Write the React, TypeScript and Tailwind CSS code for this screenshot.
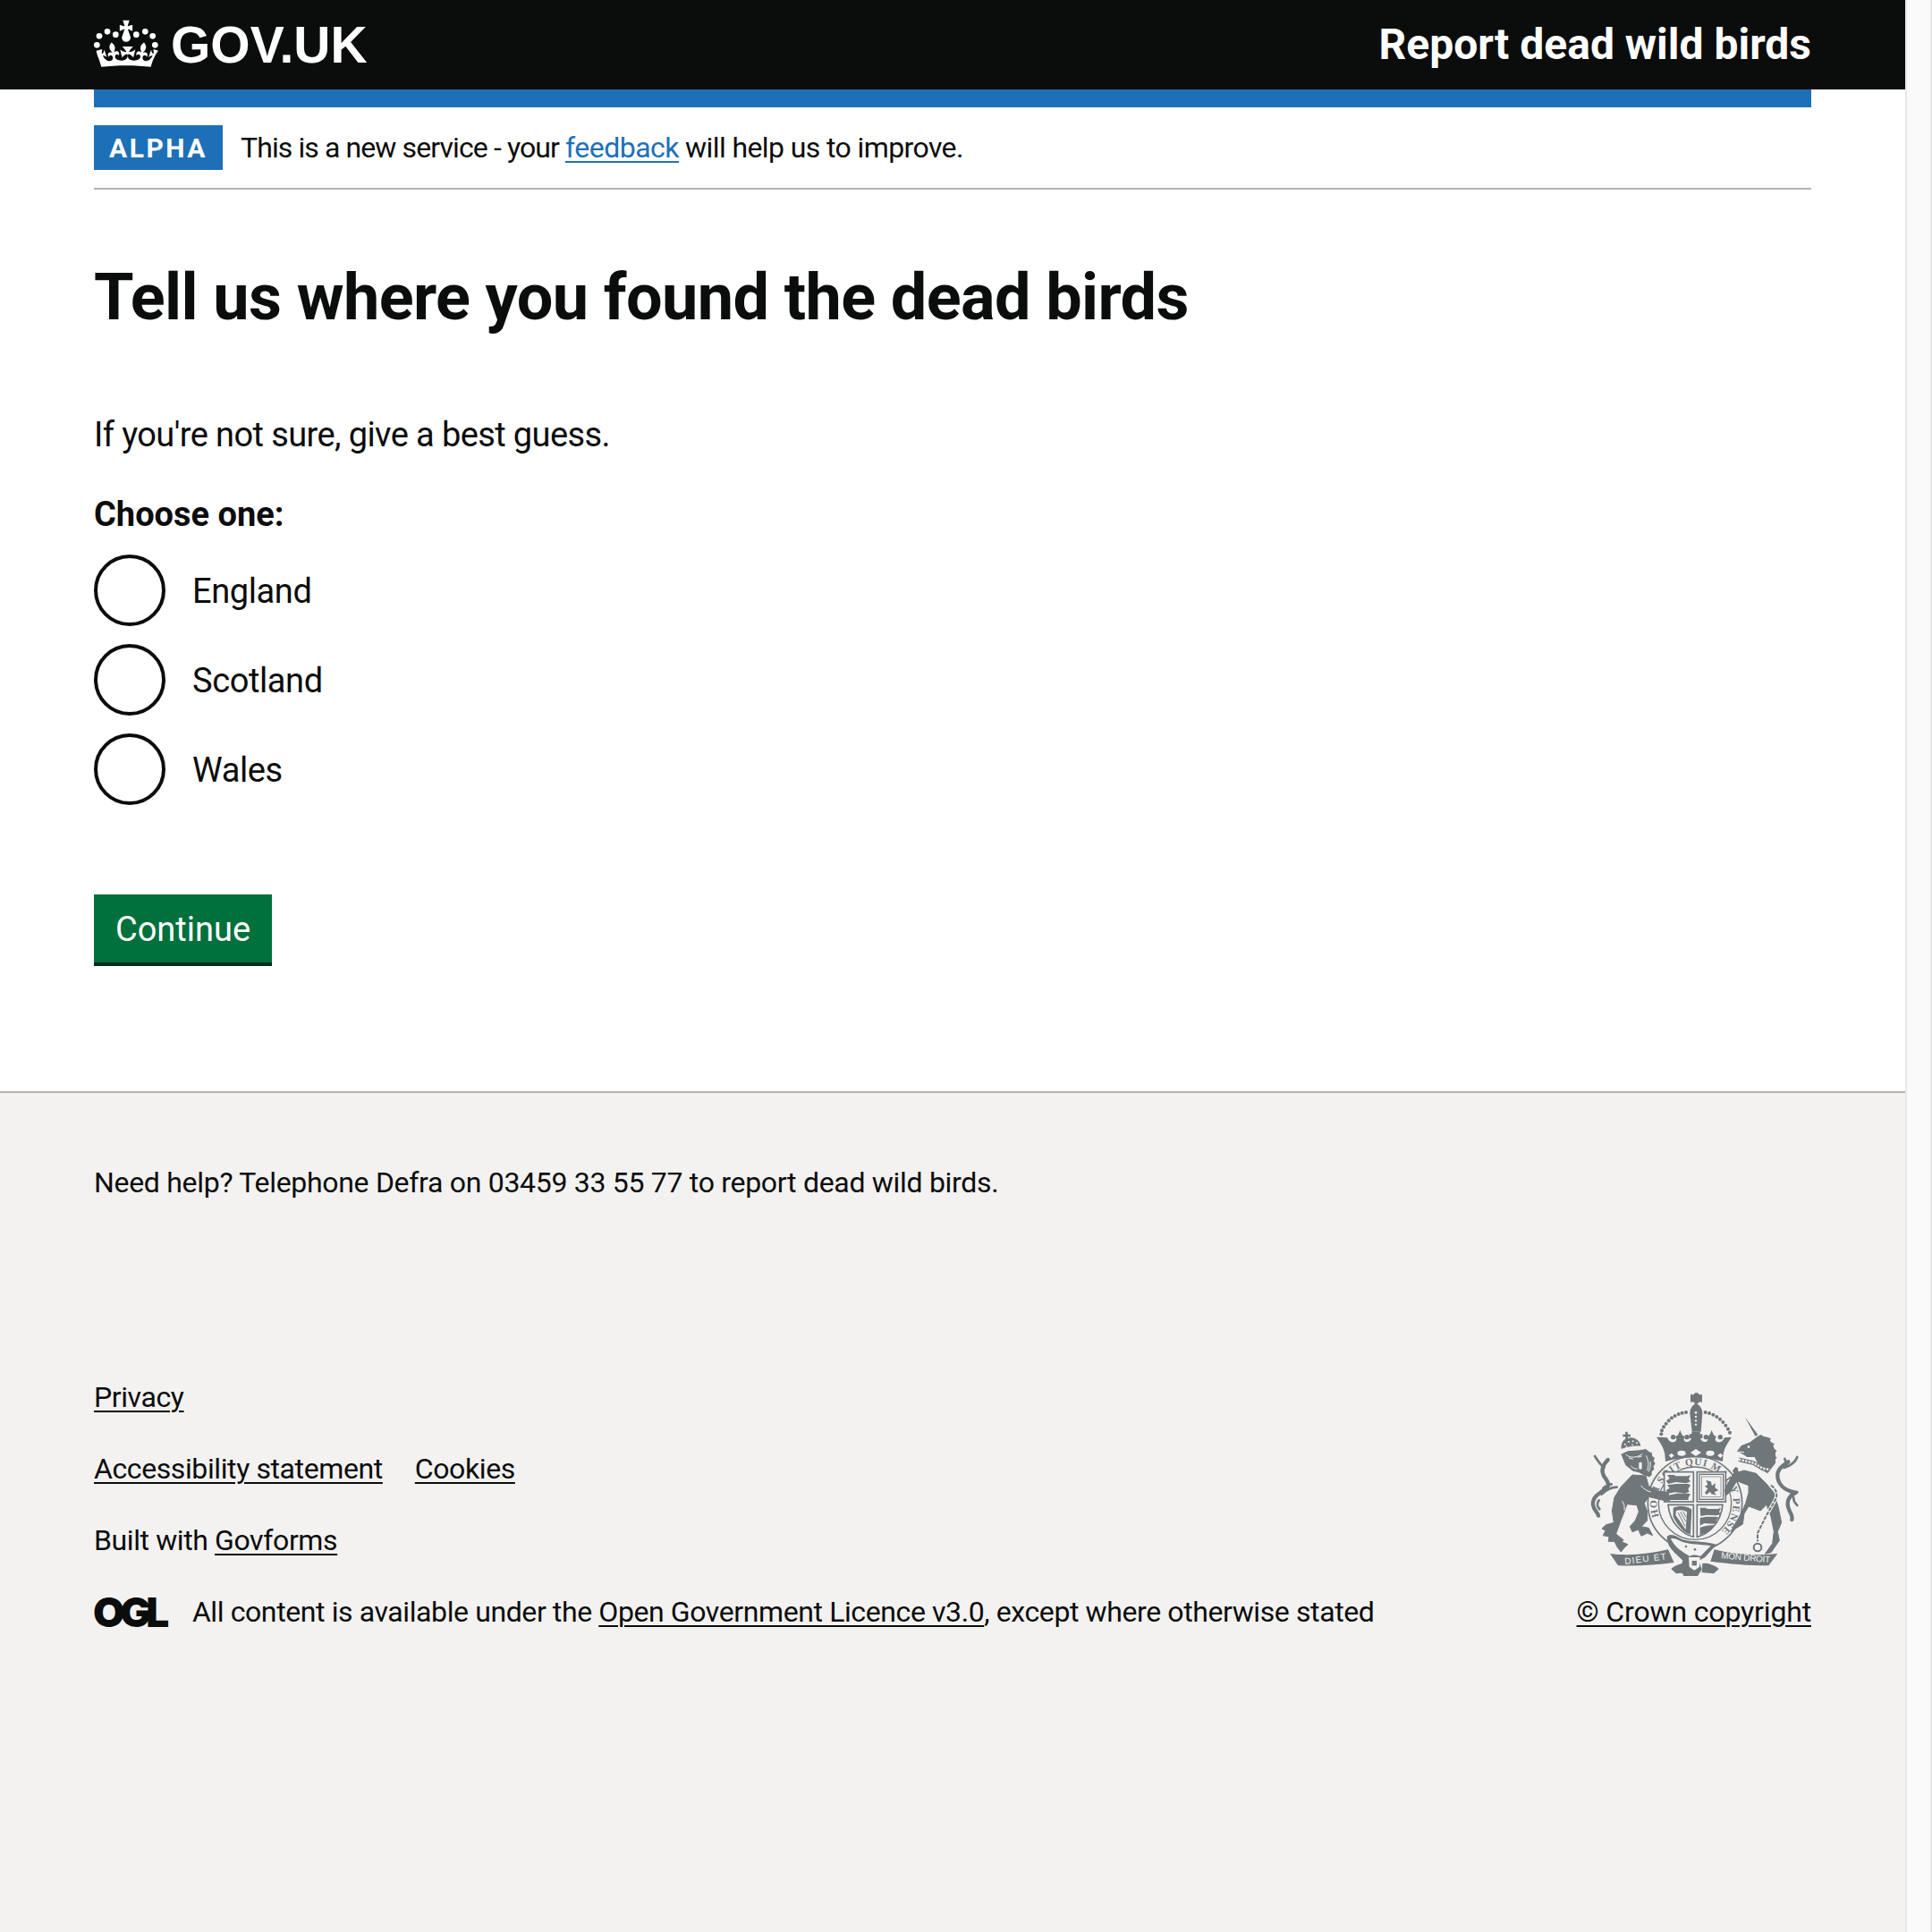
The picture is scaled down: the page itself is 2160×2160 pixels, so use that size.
const font = "font-['Roboto','Liberation_Sans',sans-serif]";
const grey = "#6f777b";
const bg = "#f3f2f1";

function Crown() {
  const pearls = [[325, 148], [333, 118], [360, 103], [388, 113], [457, 113], [487, 103], [512, 118], [520, 148]];
  return (
    <svg viewBox="315 60 216 162" className="w-[72px] h-[54px] -mt-[4px] text-white" aria-hidden="true">
      <g fill="currentColor">
        {pearls.map(([x, y]) => <circle key={x} cx={x} cy={y} r="10" />)}
        <path
          transform="translate(319 65) scale(6.5 6.2)"
          d="M17 4.7l2.3 1.2V2.5l-2.3.7-.2-.2.9-3h-3.4l.9 3-.2.2c-.1.1-2.3-.7-2.3-.7v3.4L15 4.7c.1.1.1.2.2.2l-1.3 4c-.1.2-.1.4-.1.6 0 1.1.8 2 1.9 2.2h.7c1-.2 1.9-1.1 1.9-2.2 0-.2 0-.4-.1-.6l-1.3-4c-.1-.1 0-.2.1-.2"
        />
        <path
          transform="translate(315 37) scale(6.75 6.15)"
          d="M16 29.2c4.4 0 8.6.3 12.3.8 1.1-4.5 2.4-7 3.7-8.8l-2.5-.9c.2 1.3.3 1.9 0 2.7-.4-.4-.8-1.1-1.1-2.3l-1.2 4c.7-.5 1.3-.8 2-.9-1.1 2.5-2.6 3.1-3.5 3-1.1-.2-1.7-1.2-1.5-2.1.3-1.2 1.5-1.5 2.1-.1 1.1-2.3-.8-3-2-2.3 1.9-1.9 2.1-3.5.6-5.6-2.1 1.6-2.1 3.2-1.2 5.5-1.2-1.4-3.2-.6-2.5 1.6.9-1.4 2.1-.5 1.9.8-.2 1.1-1.7 2.1-3.5 1.9-2.7-.2-2.9-2.1-2.9-3.6.7-.1 1.9.5 2.9 1.9l1-4.3c-1.1 1.1-2.1 1.4-3.2 1.4.4-1.2 2.1-3 2.1-3h-5.4s1.7 1.9 2.1 3c-1.1 0-2.1-.2-3.2-1.4l1 4.3c1-1.4 2.2-2 2.9-1.9-.1 1.5-.2 3.4-2.9 3.6-1.9.2-3.4-.8-3.5-1.9-.2-1.3 1-2.2 1.9-.8.7-2.3-1.2-3-2.5-1.6.9-2.2.9-3.9-1.2-5.5-1.5 2-1.3 3.7.6 5.6-1.2-.7-3.1 0-2 2.3.6-1.4 1.8-1.1 2.1.1.2.9-.3 1.9-1.5 2.1-.9.2-2.4-.5-3.5-3 .6 0 1.2.3 2 .9l-1.2-4c-.3 1.1-.7 1.9-1.1 2.3-.3-.8-.2-1.4 0-2.7l-2.9.9C1.3 23 2.6 25.5 3.7 30c3.7-.5 7.9-.8 12.3-.8"
        />
      </g>
    </svg>
  );
}

// royal arms, simplified. each group is traced in the coordinates of a 3x crop
function Crest() {
  const leftPearls = [[135, 75], [122, 77], [110, 81], [98, 87], [87, 94], [77, 103], [68, 113], [60, 124], [54, 136], [52, 148]];
  const rightPearls = [[200, 75], [213, 78], [226, 83], [238, 90], [249, 98], [259, 108], [268, 119], [276, 131], [282, 143]];
  return (
    <svg viewBox="0 0 240 210" className="w-[240px] h-[210px] mr-[10px]" aria-hidden="true">
      {/* garter and shield */}
      <g transform="translate(-35 -15) scale(0.3333)">
        <circle cx="465" cy="425" r="158" fill="none" stroke={grey} strokeWidth="5" />
        <circle cx="465" cy="425" r="122" fill="none" stroke={grey} strokeWidth="4" />
        <defs>
          <path id="garter-arc" d="M374.5 515.5A128 128 0 1 1 555.5 515.5" />
        </defs>
        <text fontSize="34" fontWeight="700" fill={grey} fontFamily="'Liberation Serif',serif">
          <textPath href="#garter-arc" startOffset="55" textLength="550">HONI SOIT QUI MAL Y PENSE</textPath>
        </text>
        <g fill={bg} stroke={grey} strokeWidth="5">
          <rect x="362" y="320" width="98" height="100" />
          <rect x="472" y="320" width="96" height="100" />
          <path d="M375 430h85v108c-40-10-80-50-85-108z" />
          <path d="M472 430h86c-6 58-44 98-86 108z" />
        </g>
        {/* three lions, first and fourth quarter */}
        <g fill={grey}>
          <path d="M372 330h22l8 4h38l10-4-6 14 6 8-14 6-36-4-24 6-8-10 12-8z" />
          <path d="M372 364l30-4h40l8 4-8 14 4 8-14 6-34-4-22 4-8-10 12-8z" />
          <path d="M376 398l28-6h38l8 2-8 14 2 6h-64l-6-8z" />
          <path d="M482 440h18l8 4h34l10-4-6 14 6 8-14 4-32-2-22 4z" />
          <path d="M482 474l22-4h28l12 2-8 12 2 8-12 2-30-2-14 8z" />
          <path d="M482 506l22-6 26-2-10 14-8 8-30 12z" />
        </g>
        {/* scottish lion */}
        <rect x="480" y="328" width="80" height="84" fill="none" stroke={grey} strokeWidth="4" />
        <rect x="488" y="336" width="64" height="68" fill="none" stroke={grey} strokeWidth="2" />
        <path d="M502 348l16 4 4 14 12-8-2 14 12 10-14 6 6 10-16-4-4-8-12 10-6-6 10-14-10-8 10-6z" fill={grey} />
        {/* harp */}
        <path d="M392 440c20-8 50-6 62 6l-4 84-14-6c-14-8-32-30-44-54z" fill={grey} />
        <path d="M402 450c14-4 28-2 36 4l-4 60-34-50z" fill={bg} />
        <path d="M408 456l24 46M416 454l18 32M424 452l12 20" stroke={grey} strokeWidth="3" fill="none" />
      </g>

      {/* lion */}
      <g transform="translate(0 40) scale(0.3333)">
        <g fill="none" stroke={grey} strokeLinecap="round">
          <path strokeWidth="13" d="M68 114C52 130 44 150 55 170C70 190 75 200 60 212C40 225 15 240 18 265C20 285 35 290 36 302" />
          <path strokeWidth="8" d="M24 102C36 120 44 134 56 140M98 206C80 206 65 212 46 230M80 196C70 198 60 202 52 210M40 280C30 268 30 260 38 250" />
        </g>
        <path
          fill={grey}
          stroke={grey}
          strokeWidth="3"
          strokeLinejoin="round"
          d="M150 165l-38 40-22 35-8 45 6 40-26 7-14 13 12 7-8 16 20 4-2 16h20l10 20 12 15 10-13 13-12-20-8 5-7-25-20 17-47 13-33 7-20 33 3 7 22-12 30-18 20 8 18 20-8 10 22 20-10 18 8-13-25-25-5 20-20v-30l-10-28 15-22 40 10 30 5-5-30-30-3-35-17-10-35z"
        />
        <path
          fill={grey}
          d="M112 95l23-10 40-3 20-4 12 10 8 2 2 12 8 6-4 10 6 8-6 10 2 10-8 8 0 12-8 6-20-7-15-8-20-5-25-20z"
        />
        {/* lion's crown */}
        <path fill={grey} d="M126 20h8l1 9h9v8h-9v9h-8v-9h-9v-8h9zM113 78c-3-23 12-36 22-36 15-7 40 3 43 26-22-2-44 2-65 10z" />
        <g fill={bg}>
          <circle cx="125" cy="62" r="3" />
          <circle cx="138" cy="54" r="3" />
          <circle cx="152" cy="52" r="3" />
          <circle cx="165" cy="58" r="3" />
          <circle cx="130" cy="70" r="2.5" />
          <circle cx="150" cy="64" r="2.5" />
          <rect x="172" y="122" width="10" height="24" rx="4" />
        </g>
        <g fill="none" stroke={bg} strokeWidth="3">
          <path d="M128 96c14 14 38 12 56-2M138 108l14 4M168 106l14-4M145 135c10 8 14 12 22 8M196 100c8 16 10 32 4 50M210 120c2 12 0 24-6 34M178 200c8 10 22 20 34 22M115 252c6 6 10 18 8 32" />
        </g>
      </g>

      {/* unicorn */}
      <g transform="translate(125 25) scale(0.3333)">
        <path d="M152 15l44 60-8 6z" fill={grey} />
        <path d="M128 128l12-16 30-12 20-15 15-10 10 5 13 5 17 20 10 30v35l-15 20-12 15-23-15-20-40h-25l-15-10-20-10z" fill={grey} />
        <path d="M222 82l18 6-6 10 18 8-8 10 16 14-10 8 10 16-14 4 6 12-18-6z" fill={grey} />
        <circle cx="165" cy="116" r="4" fill={bg} />
        <path d="M132 132l18 2" stroke={bg} strokeWidth="3" fill="none" />
        <path d="M132 158l50 12 30 18 24 4" fill="none" stroke={grey} strokeWidth="14" />
        <path d="M132 158l50 12 30 18 24 4" fill="none" stroke={bg} strokeWidth="7" strokeDasharray="7 4" />
        <path
          fill={grey}
          stroke={grey}
          strokeWidth="3"
          strokeLinejoin="round"
          d="M95 240l20-35 35-10 40 10 35 35 25 30 15 50 10 50-13 30 6 30-28 40-20 5 25-35 5-40-10-50-15-40-20 20-40-15-15 25-5 35-40 25 20-35 15-25 15-35 10-35v-25l-40-15-20 35-17 15-3-20z"
        />
        <path fill={grey} d="M115 205l-4-10 10-12 8 4 2 16z" />
        <path d="M240 245c18 12 24 30 14 50l-29 50-30 60v28" fill="none" stroke={bg} strokeWidth="12" />
        <path d="M240 245c18 12 24 30 14 50l-29 50-30 60v28" fill="none" stroke={grey} strokeWidth="6" strokeDasharray="13 4" />
        <circle cx="195" cy="453" r="13" fill={bg} stroke={grey} strokeWidth="6" />
        <g fill="none" stroke={grey} strokeLinecap="round">
          <path strokeWidth="13" d="M298 166C280 180 260 190 262 215C264 245 290 262 318 268C300 285 288 300 302 330C310 345 312 355 310 360" />
          <path strokeWidth="8" d="M328 150C320 172 302 180 284 186M286 156L294 178M328 268L306 284M328 312C320 304 314 296 316 286" />
        </g>
      </g>

      {/* crown */}
      <g transform="translate(65 0) scale(0.3333)">
        <path fill={grey} d="M150 14c8 4 12 2 15-4h10c3 6 7 8 14 4v28c-7-4-11-2-14 4h-10c-3-6-7-8-15-4z" />
        <path fill={grey} d="M168 44c-13 8-20 20-20 34l7 62h30l5-62c0-14-7-26-22-34z" />
        <g fill={bg}>
          <circle cx="168" cy="76" r="4" />
          <circle cx="168" cy="90" r="3.5" />
          <circle cx="168" cy="103" r="3.5" />
          <circle cx="168" cy="116" r="3.5" />
        </g>
        <g fill={grey}>
          {leftPearls.map(([x, y]) => <circle key={x} cx={x} cy={y} r="6" />)}
          {rightPearls.map(([x, y]) => <circle key={x} cx={x} cy={y} r="6" />)}
          <path d="M48 158l24 2c6 12 12 18 24 14 10-4 8-14 2-18 8-2 12-6 17-22 5 16 9 20 17 22-6 6-6 14 2 18 8 2 16-2 20-14l-10-4 10-4v-12h28v12l10 4-10 4c4 12 12 16 20 14 8-4 8-12 2-18 8-2 12-6 17-22 5 16 9 20 17 22-6 4-8 14 2 18 12 4 18-2 24-14l24-2c-12 18-24 34-28 58l-2 24c-60-18-132-18-192 0l-2-24c-4-24-16-40-28-58z" />
          <path d="M146 148h44v14h-44z" />
          <circle cx="92" cy="158" r="8" />
          <circle cx="138" cy="158" r="8" />
          <circle cx="202" cy="158" r="8" />
          <circle cx="250" cy="158" r="8" />
        </g>
        <g fill={bg}>
          <ellipse cx="120" cy="212" rx="14" ry="9" />
          <path d="M168 198l18 12-18 12-18-12z" />
          <ellipse cx="216" cy="212" rx="14" ry="9" />
          <path d="M86 212l9 8-9 8-9-8zM250 212l9 8-9 8-9-8z" />
        </g>
      </g>

      {/* motto ribbons and buckle */}
      <g transform="translate(-35 -15) scale(0.3333)">
        <g fill={grey}>
          <path d="M180 594c60 8 130 2 195-14l20 44c-60 8-120 12-188 10z" />
          <path d="M530 580c70 18 140 22 212 14l-30 40c-70 0-130-6-195-14z" />
          <path d="M372 535c18-10 30 0 48 10 30 10 60 4 118 18l-40 44-20 10 10 30-14 22h-46l-14-22 10-30c-24-24-58-48-52-82z" />
          <path d="M385 645c20-16 40-20 55-18l2 30-40 4zM545 645c-20-16-40-20-55-18l-2 30 40 4z" />
        </g>
        <g fill={bg}>
          <path d="M384 544c16-4 26 6 42 12 28 8 52 6 92 12l-34 34-22-4-16 4c-24-14-50-30-62-58z" />
          <path d="M444 606h38l-2 32-17 12-17-12z" />
        </g>
        <circle cx="435" cy="570" r="4" fill={grey} />
        <circle cx="465" cy="580" r="4" fill={grey} />
        <rect x="455" y="618" width="16" height="16" fill={grey} />
        <g fill={bg} fontFamily="'Liberation Sans',sans-serif" fontSize="30">
          <text x="230" y="630" transform="rotate(-7 230 630)" textLength="140">DIEU ET</text>
          <text x="552" y="610" transform="rotate(5 552 610)" textLength="165">MON DROIT</text>
        </g>
      </g>
    </svg>
  );
}

function Radio({ label }: { label: string }) {
  return (
    <label className="flex items-center h-[80px] gap-[30px]">
      <span className="w-[80px] h-[80px] rounded-full border-4 border-[#0b0c0c] bg-white shrink-0" />
      <span className="text-[38px] leading-[50px] tracking-[-0.4px] pt-[2px]">{label}</span>
    </label>
  );
}

const link = "underline underline-offset-[4px] decoration-2";

export default function App() {
  return (
    <div className={`flex w-[2160px] min-h-[2160px] text-[#0b0c0c] ${font}`}>
      <div className="w-[2130px] flex flex-col bg-white">
        <header className="h-[100px] bg-[#0b0c0c] px-[105px] flex items-center justify-between text-white">
          <div className="flex items-center gap-[14px]">
            <Crown />
            <span className="font-['Liberation_Sans',sans-serif] font-bold text-[57px] leading-none">GOV.UK</span>
          </div>
          <span className="font-bold text-[48px] leading-none">Report dead wild birds</span>
        </header>

        <div className="px-[105px]">
          <div className="h-[20px] bg-[#1d70b8]" />
          <div className="flex items-center gap-[20px] py-[20px] border-b-2 border-[#b1b4b6]">
            <strong className="w-[144px] h-[50px] flex items-center justify-center bg-[#1d70b8] text-white text-[30px] font-bold tracking-[2.5px]">
              ALPHA
            </strong>
            <p className="text-[32px] leading-[40px] tracking-[-0.9px]">
              This is a new service - your <a className={`${link} text-[#1d70b8] tracking-[-0.5px]`}>feedback</a>{" "}
              <span className="tracking-[-0.6px]">will help us to improve.</span>
            </p>
          </div>

          <h1 className="mt-[76px] text-[72px] leading-[90px] font-bold tracking-[-0.6px]">
            Tell us where you found the dead birds
          </h1>

          <p className="mt-[83px] text-[38px] leading-[50px] tracking-[-0.6px]">If you're not sure, give a best guess.</p>
          <p className="mt-[39px] text-[38px] leading-[50px] font-bold">Choose one:</p>

          <div className="mt-[20px] flex flex-col gap-[20px]">
            <Radio label="England" />
            <Radio label="Scotland" />
            <Radio label="Wales" />
          </div>

          <button className="mt-[100px] block w-[199px] h-[80px] bg-[#00703c] border-b-4 border-[#002d18] pt-[2px] text-white text-[38px] leading-none">
            Continue
          </button>
        </div>

        <footer className="mt-[140px] flex-1 bg-[#f3f2f1] border-t-2 border-[#b1b4b6] px-[105px] text-[32px] leading-[40px]">
          <p className="mt-[80px] tracking-[-0.3px]">Need help? Telephone Defra on 03459 33 55 77 to report dead wild birds.</p>

          <div className="mt-[200px] flex justify-between items-end tracking-[-0.4px]">
            <div className="flex flex-col gap-[40px]">
              <a className={link}>Privacy</a>
              <div className="flex gap-[36px]">
                <a className={link}>Accessibility statement</a>
                <a className={link}>Cookies</a>
              </div>
              <p>
                Built with <a className={link}>Govforms</a>
              </p>
              <div className="flex items-center gap-[31px]">
                <span className="font-['Inter',sans-serif] font-black text-[46px] leading-[40px] tracking-[-5.5px] -ml-[1px]">OGL</span>
                <p>
                  All content is available under the <a className={link}>Open Government Licence v3.0</a>, except where otherwise stated
                </p>
              </div>
            </div>
            <div className="flex flex-col items-end">
              <Crest />
              <a className={`${link} mt-[18px] tracking-[-0.15px]`}>© Crown copyright</a>
            </div>
          </div>
        </footer>
      </div>

      {/* page scrollbar track */}
      <div className="w-[30px] bg-[#fafafa] border-x-2 border-[#e8e8e8]" />
    </div>
  );
}
